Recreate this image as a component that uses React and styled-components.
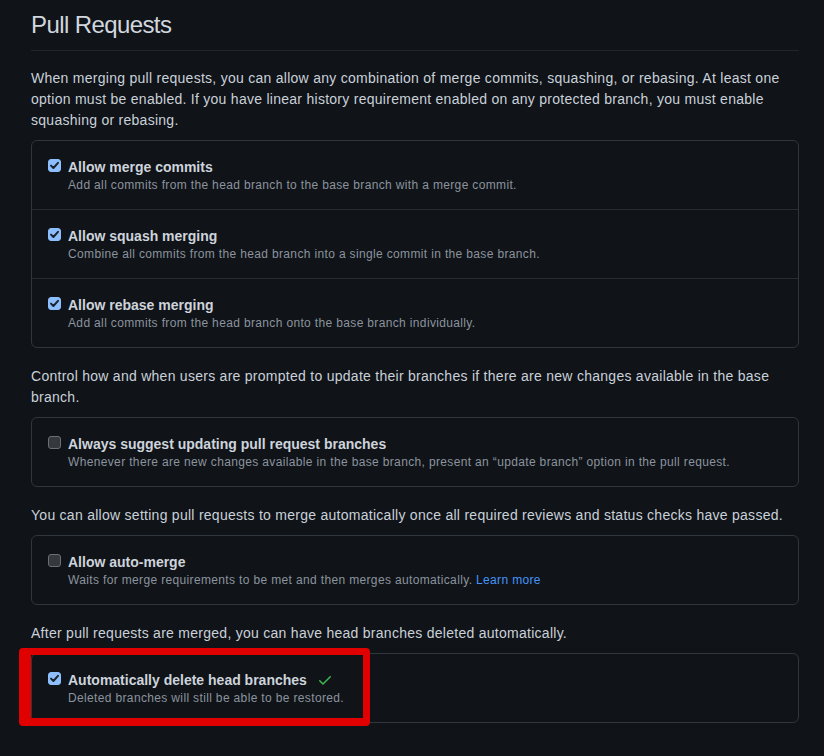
import { createGlobalStyle, styled } from "styled-components";

const GlobalStyle = createGlobalStyle`
  html, body {
    margin: 0;
    background: #101318;
  }
  body {
    font-family: "Liberation Sans", Arial, sans-serif;
    color: #c9d1d9;
  }
`;

const Page = styled.div`
  width: 768px;
  padding: 10px 0 40px 31px;
`;

const Heading = styled.h2`
  margin: 0 0 17px;
  padding-bottom: 10px;
  border-bottom: 1px solid #21262d;
  font-size: 24px;
  line-height: 30px;
  font-weight: 400;
  letter-spacing: -0.6px;
  color: #d0d7de;
`;

const Para = styled.p`
  margin: 0 0 9px;
  font-size: 14px;
  line-height: 21px;
  letter-spacing: 0.27px;
  color: #c9d1d9;
`;

const Box = styled.div`
  position: relative;
  border: 1px solid #30363d;
  border-radius: 6px;
  margin-bottom: 18px;
`;

const Row = styled.div`
  display: flex;
  align-items: flex-start;
  gap: 7px;
  padding: 16px;

  & + & {
    border-top: 1px solid #262c33;
  }
`;

const Check = styled.span`
  flex: 0 0 13px;
  width: 13px;
  height: 13px;
  margin-top: 2px;
  box-sizing: border-box;
  border-radius: 3px;
  display: flex;
  align-items: center;
  justify-content: center;
  background: ${(p) => (p.$checked ? "#8dbfff" : "#35383d")};
  border: 1px solid ${(p) => (p.$checked ? "#8dbfff" : "#6b7077")};
`;

const Texts = styled.div`
  display: flex;
  flex-direction: column;
`;

const Title = styled.div`
  display: flex;
  align-items: center;
  gap: 10px;
  font-size: 14px;
  line-height: 20px;
  font-weight: 700;
  color: #cdd4dc;
`;

const Note = styled.div`
  font-size: 12px;
  line-height: 16px;
  letter-spacing: 0.35px;
  color: #8b949e;
`;

const Link = styled.a`
  color: #4493f8;
  text-decoration: none;
`;

const Highlight = styled.div`
  position: absolute;
  left: -13px;
  top: -6px;
  width: 351px;
  height: 78px;
  box-sizing: border-box;
  border-style: solid;
  border-color: #e00000;
  border-width: 7px 7px 8px 12px;
  border-radius: 4px;
  pointer-events: none;
`;

function Checkbox({ checked }) {
  return (
    <Check $checked={checked}>
      {checked && (
        <svg width="11" height="11" viewBox="0 0 11 11">
          <path
            d="M2 5.6 L4.4 8 L9 2.8"
            fill="none"
            stroke="#1d232b"
            strokeWidth="2"
            strokeLinecap="round"
            strokeLinejoin="round"
          />
        </svg>
      )}
    </Check>
  );
}

function SavedIcon() {
  return (
    <svg width="16" height="16" viewBox="0 0 16 16" fill="#3fb950">
      <path d="M13.78 4.22a.75.75 0 0 1 0 1.06l-7.25 7.25a.75.75 0 0 1-1.06 0L2.22 9.28a.751.751 0 0 1 .018-1.042.751.751 0 0 1 1.042-.018L6 10.94l6.72-6.72a.75.75 0 0 1 1.06 0Z" />
    </svg>
  );
}

function Option({ checked, title, note, extra }) {
  return (
    <Row>
      <Checkbox checked={checked} />
      <Texts>
        <Title>
          {title}
          {extra}
        </Title>
        <Note>{note}</Note>
      </Texts>
    </Row>
  );
}

export default function App() {
  return (
    <>
      <GlobalStyle />
      <Page>
        <Heading>Pull Requests</Heading>

        <Para>
          When merging pull requests, you can allow any combination of merge
          commits, squashing, or rebasing. At least one option must be enabled.
          If you have linear history requirement enabled on any protected
          branch, you must enable squashing or rebasing.
        </Para>
        <Box>
          <Option
            checked
            title="Allow merge commits"
            note="Add all commits from the head branch to the base branch with a merge commit."
          />
          <Option
            checked
            title="Allow squash merging"
            note="Combine all commits from the head branch into a single commit in the base branch."
          />
          <Option
            checked
            title="Allow rebase merging"
            note="Add all commits from the head branch onto the base branch individually."
          />
        </Box>

        <Para>
          Control how and when users are prompted to update their branches if
          there are new changes available in the base branch.
        </Para>
        <Box>
          <Option
            title="Always suggest updating pull request branches"
            note="Whenever there are new changes available in the base branch, present an “update branch” option in the pull request."
          />
        </Box>

        <Para>
          You can allow setting pull requests to merge automatically once all
          required reviews and status checks have passed.
        </Para>
        <Box>
          <Option
            title="Allow auto-merge"
            note={
              <>
                Waits for merge requirements to be met and then merges
                automatically. <Link href="#">Learn more</Link>
              </>
            }
          />
        </Box>

        <Para>
          After pull requests are merged, you can have head branches deleted
          automatically.
        </Para>
        <Box>
          <Option
            checked
            title="Automatically delete head branches"
            note="Deleted branches will still be able to be restored."
            extra={<SavedIcon />}
          />
          <Highlight />
        </Box>
      </Page>
    </>
  );
}
